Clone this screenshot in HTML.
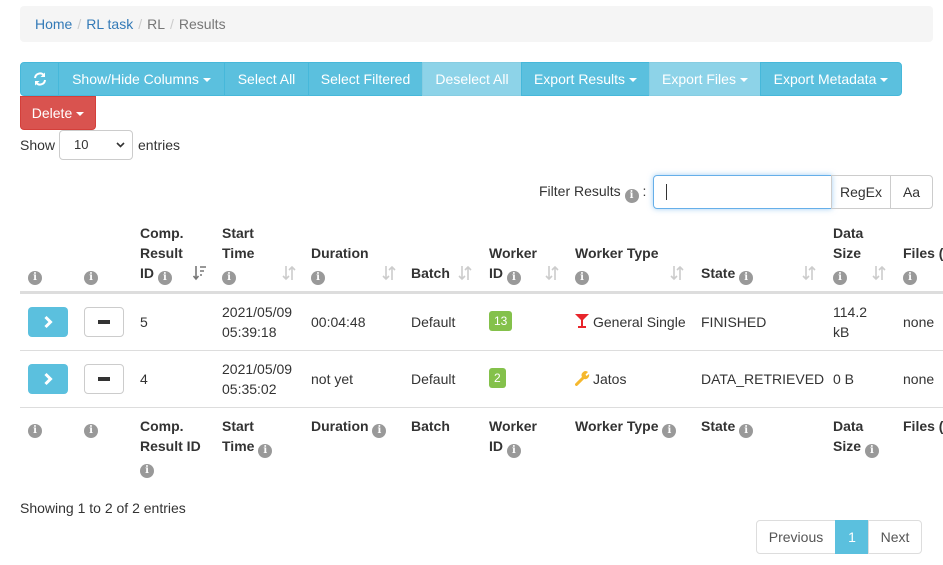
<!DOCTYPE html>
<html><head><meta charset="utf-8"><style>
body{margin:0;width:943px;height:565px;overflow:hidden;background:#fff;font-family:"Liberation Sans",sans-serif;font-size:14px;color:#333;position:relative}
.a{position:absolute;white-space:nowrap}
.bc{left:20px;top:6px;width:913px;height:36px;background:#f5f5f5;border-radius:4px;color:#777}
.bc span{color:#ccc;padding:0 5px}
.bc a{color:#337ab7;text-decoration:none}
.tb{top:62px;height:34px;background:#5bc0de;color:#fff;border:1px solid #46b8da;box-sizing:border-box;line-height:32px;text-align:center}
.lt{background:#8dd3e8;border-color:#86cde2}
.car{display:inline-block;border-top:4px solid #fff;border-left:4px solid transparent;border-right:4px solid transparent;vertical-align:middle;margin-left:4px}
.b{font-weight:bold;line-height:20px}
.i{display:inline-block;width:14px;height:14px;border-radius:50%;background:#999;color:#fff;font-size:10px;line-height:14px;text-align:center;font-weight:bold;font-family:"DejaVu Serif",serif;vertical-align:-2px}
.s{width:14px;height:16px}
.hl{left:20px;width:923px;height:1px;background:#ddd}
.bb{width:40px;height:30px;border-radius:4px;background:#5bc0de}
.wb{width:38px;height:28px;border:1px solid #ccc;border-radius:4px;background:#fff}
.wb:after{content:"";position:absolute;left:13px;top:12px;width:12px;height:4px;background:#333}
.lbl{background:#84c14b;color:#fff;font-size:12px;border-radius:3px;padding:0 5px;line-height:20px;height:20px}
</style></head><body>
<div class="a bc" style="line-height:36px;padding-left:15px;box-sizing:border-box"><a>Home</a><span>/</span><a>RL task</a><span>/</span>RL<span>/</span>Results</div>

<div class="a tb" style="left:20px;width:39px;border-radius:4px 0 0 4px"><svg width="14" height="14" viewBox="0 0 14 14" style="vertical-align:-2px"><path d="M2 6 A5 5 0 0 1 11 3.5 M12 8 A5 5 0 0 1 3 10.5" stroke="#fff" stroke-width="2" fill="none"/><path d="M12 0.5 V5 H7.5Z M2 13.5 V9 H6.5Z" fill="#fff"/></svg></div>
<div class="a tb" style="left:58px;width:167px">Show/Hide Columns<span class="car"></span></div>
<div class="a tb" style="left:224px;width:85px">Select All</div>
<div class="a tb" style="left:308px;width:115px">Select Filtered</div>
<div class="a tb lt" style="left:422px;width:100px">Deselect All</div>
<div class="a tb" style="left:521px;width:129px">Export Results<span class="car"></span></div>
<div class="a tb lt" style="left:649px;width:112px">Export Files<span class="car"></span></div>
<div class="a tb" style="left:760px;width:142px;border-radius:0 4px 4px 0">Export Metadata<span class="car"></span></div>
<div class="a tb" style="left:20px;top:96px;width:76px;background:#d9534f;border-color:#d43f3a;border-radius:0 0 4px 4px">Delete<span class="car"></span></div>

<div class="a" style="left:20px;top:137px">Show</div>
<div class="a" style="left:59px;top:130px;width:74px;height:30px;border:1px solid #ccc;border-radius:4px;box-sizing:border-box;line-height:28px;padding-left:14px;font-size:13px">10<svg style="position:absolute;right:7px;top:11px" width="9" height="6"><path d="M1 1 L4.5 4.5 L8 1" stroke="#333" stroke-width="1.6" fill="none"/></svg></div>
<div class="a" style="left:138px;top:137px">entries</div>

<div class="a" style="left:539px;top:183px">Filter Results <span class="i">i</span> :</div>
<div class="a" style="left:653px;top:175px;width:179px;height:34px;border:1px solid #66afe9;box-shadow:0 0 6px rgba(102,175,233,.6);border-radius:4px 0 0 4px;box-sizing:border-box"><div style="position:absolute;left:12px;top:8px;width:1px;height:16px;background:#333"></div></div>
<div class="a" style="left:831px;top:175px;width:60px;height:34px;border:1px solid #ccc;box-sizing:border-box;line-height:32px;text-align:center">RegEx</div>
<div class="a" style="left:890px;top:175px;width:43px;height:34px;border:1px solid #ccc;border-radius:0 4px 4px 0;box-sizing:border-box;line-height:32px;text-align:center">Aa</div>

<svg width="0" height="0" style="position:absolute"><defs>
<g id="srt"><path d="M4 1 V14 M1 11 L4 14 L7 11 M10 15 V2 M7 5 L10 2 L13 5" stroke="#ccc" stroke-width="1.6" fill="none"/></g>
</defs></svg>

<!-- header -->
<div class="a b" style="left:28px;top:263px"><span class="i">i</span></div>
<div class="a b" style="left:84px;top:263px"><span class="i">i</span></div>
<div class="a b" style="left:140px;top:223px">Comp.<br>Result<br>ID <span class="i">i</span></div>
<svg class="a s" style="left:193px;top:265px"><path d="M3 1 V14 M0.5 11 L3 14 L5.5 11" stroke="#777" stroke-width="1.6" fill="none"/><path d="M7 2 H13 M7 6 H11 M7 10 H9" stroke="#777" stroke-width="1.6"/></svg>
<svg class="a s" style="left:282px;top:265px"><use href="#srt"/></svg>
<div class="a b" style="left:222px;top:223px">Start<br>Time<br><span class="i">i</span></div>
<div class="a b" style="left:311px;top:243px">Duration<br><span class="i">i</span></div>
<svg class="a s" style="left:382px;top:265px"><use href="#srt"/></svg>
<div class="a b" style="left:411px;top:263px">Batch</div>
<svg class="a s" style="left:458px;top:265px"><use href="#srt"/></svg>
<div class="a b" style="left:489px;top:243px">Worker<br>ID <span class="i">i</span></div>
<svg class="a s" style="left:545px;top:265px"><use href="#srt"/></svg>
<div class="a b" style="left:575px;top:243px">Worker Type<br><span class="i">i</span></div>
<svg class="a s" style="left:670px;top:265px"><use href="#srt"/></svg>
<div class="a b" style="left:701px;top:263px">State <span class="i">i</span></div>
<svg class="a s" style="left:802px;top:265px"><use href="#srt"/></svg>
<div class="a b" style="left:833px;top:223px">Data<br>Size<br><span class="i">i</span></div>
<svg class="a s" style="left:872px;top:265px"><use href="#srt"/></svg>
<div class="a b" style="left:903px;top:243px">Files (:<br><span class="i">i</span></div>
<div class="a" style="left:20px;top:291px;width:923px;height:3px;background:#ddd"></div>

<!-- row1 -->
<div class="a bb" style="left:28px;top:307px"><svg width="40" height="30"><path d="M17.5 10 L22.5 15 L17.5 20" stroke="#fff" stroke-width="3" fill="none"/></svg></div>
<div class="a wb" style="left:84px;top:307px"></div>
<div class="a" style="left:140px;top:314px">5</div>
<div class="a" style="left:222px;top:302px;line-height:20px">2021/05/09<br>05:39:18</div>
<div class="a" style="left:311px;top:314px">00:04:48</div>
<div class="a" style="left:411px;top:314px">Default</div>
<div class="a lbl" style="left:489px;top:311px">13</div>
<svg class="a" style="left:575px;top:314px" width="14" height="14"><path d="M0 0 H14 L8 6 V12 H11 V14 H3 V12 H6 V6Z" fill="#e8252b"/></svg>
<div class="a" style="left:593px;top:314px">General Single</div>
<div class="a" style="left:701px;top:314px">FINISHED</div>
<div class="a" style="left:833px;top:302px;line-height:20px">114.2<br>kB</div>
<div class="a" style="left:903px;top:314px">none</div>
<div class="a hl" style="top:350px"></div>

<!-- row2 -->
<div class="a bb" style="left:28px;top:364px"><svg width="40" height="30"><path d="M17.5 10 L22.5 15 L17.5 20" stroke="#fff" stroke-width="3" fill="none"/></svg></div>
<div class="a wb" style="left:84px;top:364px"></div>
<div class="a" style="left:140px;top:371px">4</div>
<div class="a" style="left:222px;top:359px;line-height:20px">2021/05/09<br>05:35:02</div>
<div class="a" style="left:311px;top:371px">not yet</div>
<div class="a" style="left:411px;top:371px">Default</div>
<div class="a lbl" style="left:489px;top:368px">2</div>
<svg class="a" style="left:575px;top:371px" width="15" height="15"><path d="M1.5 13.5 L8 7" stroke="#f5b82e" stroke-width="3" stroke-linecap="round"/><path d="M7 6 A4 4 0 0 1 13 1 L10.5 3.5 L11.5 5 L14 3 A4 4 0 0 1 9 8Z" fill="#f5b82e"/></svg>
<div class="a" style="left:593px;top:371px">Jatos</div>
<div class="a" style="left:701px;top:371px">DATA_RETRIEVED</div>
<div class="a" style="left:833px;top:371px">0 B</div>
<div class="a" style="left:903px;top:371px">none</div>
<div class="a hl" style="top:407px"></div>

<!-- footer -->
<div class="a b" style="left:28px;top:416px"><span class="i">i</span></div>
<div class="a b" style="left:84px;top:416px"><span class="i">i</span></div>
<div class="a b" style="left:140px;top:416px">Comp.<br>Result ID<br><span class="i">i</span></div>
<div class="a b" style="left:222px;top:416px">Start<br>Time <span class="i">i</span></div>
<div class="a b" style="left:311px;top:416px">Duration <span class="i">i</span></div>
<div class="a b" style="left:411px;top:416px">Batch</div>
<div class="a b" style="left:489px;top:416px">Worker<br>ID <span class="i">i</span></div>
<div class="a b" style="left:575px;top:416px">Worker Type <span class="i">i</span></div>
<div class="a b" style="left:701px;top:416px">State <span class="i">i</span></div>
<div class="a b" style="left:833px;top:416px">Data<br>Size <span class="i">i</span></div>
<div class="a b" style="left:903px;top:416px">Files (:</div>

<div class="a" style="left:20px;top:500px">Showing 1 to 2 of 2 entries</div>
<div class="a" style="left:756px;top:520px;width:80px;height:34px;border:1px solid #ddd;border-radius:4px 0 0 4px;box-sizing:border-box;line-height:32px;text-align:center;color:#555">Previous</div>
<div class="a" style="left:835px;top:520px;width:34px;height:34px;background:#5bc0de;border:1px solid #5bc0de;box-sizing:border-box;line-height:32px;text-align:center;color:#fff">1</div>
<div class="a" style="left:868px;top:520px;width:54px;height:34px;border:1px solid #ddd;border-radius:0 4px 4px 0;box-sizing:border-box;line-height:32px;text-align:center;color:#555">Next</div>
</body></html>
